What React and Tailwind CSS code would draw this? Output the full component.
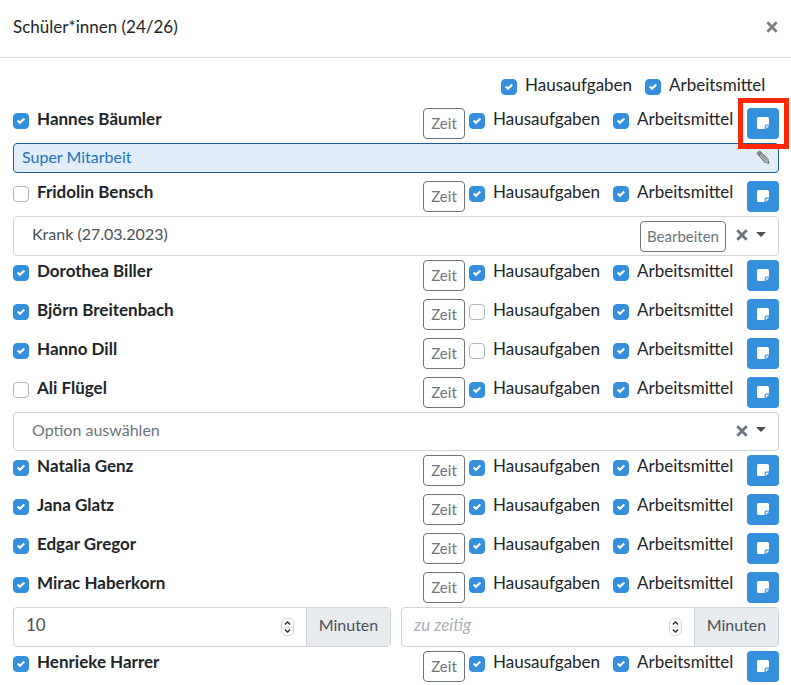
import { useState } from "react";

const STUDENTS = [
  { id: 1, name: "Hannes Bäumler", present: true, homework: true, material: true, note: "Super Mitarbeit", highlight: true },
  { id: 2, name: "Fridolin Bensch", present: false, homework: true, material: true, absence: "Krank (27.03.2023)" },
  { id: 3, name: "Dorothea Biller", present: true, homework: true, material: true },
  { id: 4, name: "Björn Breitenbach", present: true, homework: false, material: true },
  { id: 5, name: "Hanno Dill", present: true, homework: false, material: true },
  { id: 6, name: "Ali Flügel", present: false, homework: true, material: true, absence: "" },
  { id: 7, name: "Natalia Genz", present: true, homework: true, material: true },
  { id: 8, name: "Jana Glatz", present: true, homework: true, material: true },
  { id: 9, name: "Edgar Gregor", present: true, homework: true, material: true },
  { id: 10, name: "Mirac Haberkorn", present: true, homework: true, material: true, late: 10 },
  { id: 11, name: "Henrieke Harrer", present: true, homework: true, material: true },
];

function CrossIcon() {
  return (
    <svg viewBox="0 0 12 12" className="size-3" fill="none" stroke="currentColor" strokeWidth="2.8" aria-hidden="true">
      <path d="M1.300 1.300 10.700 10.700M10.700 1.300 1.300 10.700" />
    </svg>
  );
}

function NoteIcon() {
  return (
    <svg viewBox="0 0 14 14" className="size-3.5" aria-hidden="true">
      <path d="M2.600 1h8.800A1.600 1.600 0 0 1 13 2.600V8.600H10.200A1.600 1.600 0 0 0 8.600 10.200V13H2.600A1.600 1.600 0 0 1 1 11.400V2.600A1.600 1.600 0 0 1 2.600 1Z" fill="#fff" />
      <path d="M9.600 12.900v-2.300a1 1 0 0 1 1-1h2.300a2 2 0 0 1-.4.800l-2.100 2.100a2 2 0 0 1-.8.400Z" fill="#d9eaf9" />
    </svg>
  );
}

function PencilIcon() {
  return (
    <svg viewBox="0 0 14 14" className="size-3.5" aria-hidden="true">
      <path d="M1.200 3.400C1.200 2 2.400 1 3.800 1.200L12 8.800l1 4.400-4.400-.9Z" fill="#b9bec3" stroke="#6b7074" strokeWidth=".8" />
      <path d="M2.500 2.300 10.400 10.600M1.600 4 9.200 12M4 1.700l7.600 7.500M1.400 4.200 4.400 1.400M2.600 5.400 5.600 2.400" stroke="#6b7074" strokeWidth=".8" fill="none" />
      <path d="m13.200 13.400-.4-1.900-1.500 1.500Z" fill="#45494c" />
    </svg>
  );
}

function Check({ label, defaultChecked, className }) {
  const [checked, setChecked] = useState(defaultChecked);
  return (
    <label className={`flex shrink-0 items-start gap-2 leading-6 whitespace-nowrap ${className}`}>
      <span className="mt-1.5 grid size-4 shrink-0 place-items-center">
        <input
          type="checkbox"
          checked={checked}
          onChange={(e) => setChecked(e.target.checked)}
          className="col-start-1 row-start-1 size-4 appearance-none rounded-[4px] border border-[#adb5bd] bg-white checked:border-[#3490dc] checked:bg-[#3490dc]"
        />
        {checked && (
          <svg viewBox="0 0 8 8" className="pointer-events-none col-start-1 row-start-1 size-2" aria-hidden="true">
            <path fill="#fff" d="M6.564.75l-3.590 3.612-1.538-1.550L0 4.260 2.974 7.250 8 2.193z" />
          </svg>
        )}
      </span>
      <span>{label}</span>
    </label>
  );
}

function OutlineButton({ children, className }) {
  return (
    <button
      type="button"
      className={`h-[31px] shrink-0 rounded-[4px] border border-[#6c757d] bg-white text-[15px] text-[#6c757d] ${className}`}
    >
      {children}
    </button>
  );
}

function StudentRow({ student }) {
  return (
    <div className="flex items-start pt-[3px] pb-1 group-last:pb-0">
      <Check label={student.name} defaultChecked={student.present} className="mr-auto font-bold" />
      <OutlineButton className="mt-px mr-1 w-[42px]">Zeit</OutlineButton>
      <Check label="Hausaufgaben" defaultChecked={student.homework} className="w-36" />
      <Check label="Arbeitsmittel" defaultChecked={student.material} className="w-[134px]" />
      <div className="relative mt-px shrink-0">
        <button
          type="button"
          aria-label="Notiz"
          className="flex h-[31px] w-8 items-center justify-center rounded-[4px] bg-[#3490dc] pb-px"
        >
          <NoteIcon />
        </button>
        {student.highlight && (
          <span className="pointer-events-none absolute -inset-y-2.5 -right-2.5 -left-[9px] border-5 border-[#ff2600]" />
        )}
      </div>
    </div>
  );
}

function NoteBar({ text }) {
  return (
    <div className="mb-1 flex h-[30px] items-center justify-between rounded-[4px] border border-[#1d6099] bg-[#e1eefa] px-2 pb-0.5 text-base text-[#2072b8]">
      <span className="leading-6">{text}</span>
      <button type="button" aria-label="Notiz bearbeiten">
        <PencilIcon />
      </button>
    </div>
  );
}

function AbsenceSelect({ value }) {
  return (
    <div className={`flex items-center rounded-[4px] border border-[#ced4da] bg-white pr-3 ${value ? "h-10" : "h-[39px]"}`}>
      <select
        aria-label="Grund"
        defaultValue={value}
        className={`h-full min-w-0 flex-1 appearance-none bg-transparent pb-1 pl-[18px] text-base ${value ? "text-[#495057]" : "text-[#6c757d]"}`}
      >
        <option value="">Option auswählen</option>
        <option value="Krank (27.03.2023)">Krank (27.03.2023)</option>
      </select>
      {value && <OutlineButton className="mr-2.5 w-[86px]">Bearbeiten</OutlineButton>}
      <button type="button" aria-label="Auswahl löschen" className="mr-2 mb-0.5 text-[#6c757d]">
        <CrossIcon />
      </button>
      <svg viewBox="0 0 10 5" className="mb-1 h-[5px] w-2.5" aria-hidden="true">
        <path d="M0 0h10L5 5z" fill="#495057" />
      </svg>
    </div>
  );
}

function MinutesInput({ label, initial, placeholder }) {
  const [value, setValue] = useState(initial);
  return (
    <div className="flex h-10 flex-1 overflow-hidden rounded-[4px] border border-[#ced4da] bg-white text-[#495057]">
      <input
        type="number"
        aria-label={label}
        value={value}
        placeholder={placeholder}
        onChange={(e) => setValue(e.target.value)}
        className="min-w-0 flex-1 appearance-none pb-1 pl-3 [appearance:textfield] placeholder:text-[#a9b2ba] placeholder:italic"
      />
      <span className="mr-3 flex h-[18px] w-[13px] flex-col self-center rounded-[5px] border border-[#d5d5d5] text-[#333]">
        <button type="button" aria-label="Mehr" onClick={() => setValue(Number(value) + 1)} className="flex flex-1 items-center justify-center border-b border-[#dedede]">
          <svg viewBox="0 0 7 4" className="h-1 w-[7px]" fill="none" stroke="currentColor" strokeWidth="1.4">
            <path d="M.8 3.500 3.500.9l2.700 2.600" />
          </svg>
        </button>
        <button type="button" aria-label="Weniger" onClick={() => setValue(Number(value) - 1)} className="flex flex-1 items-center justify-center">
          <svg viewBox="0 0 7 4" className="h-1 w-[7px]" fill="none" stroke="currentColor" strokeWidth="1.4">
            <path d="M.8.5l2.700 2.600L6.200.5" />
          </svg>
        </button>
      </span>
      <span className="flex w-[84px] shrink-0 items-center justify-center border-l border-[#ced4da] bg-[#e9ecef] pb-1 text-base">
        Minuten
      </span>
    </div>
  );
}

export default function App() {
  return (
    <main className="bg-white font-['Lato',sans-serif] text-[17px] text-[#212529]">
      <header className="flex h-[58px] items-center justify-between border-b border-[#dee2e6] px-[13px] pb-1">
        <h1 className="leading-6">Schüler*innen (24/26)</h1>
        <button type="button" aria-label="Schließen" className="text-[#7f7f7f]">
          <CrossIcon />
        </button>
      </header>

      <div className="pt-[13px] pr-3 pl-[13px]">
        <div className="flex h-[33px] justify-end pt-0.5">
          <Check label="Hausaufgaben" defaultChecked className="w-36" />
          <Check label="Arbeitsmittel" defaultChecked className="w-[134px]" />
        </div>

        {STUDENTS.map((student) => (
          <section key={student.id} className="group">
            <StudentRow student={student} />
            {student.note && <NoteBar text={student.note} />}
            {student.absence !== undefined && <AbsenceSelect value={student.absence} />}
            {student.late && (
              <div className="flex gap-2.5">
                <MinutesInput label="Minuten zu spät" initial={student.late} placeholder="zu spät" />
                <MinutesInput label="Minuten zu zeitig" initial="" placeholder="zu zeitig" />
              </div>
            )}
          </section>
        ))}
      </div>
    </main>
  );
}
